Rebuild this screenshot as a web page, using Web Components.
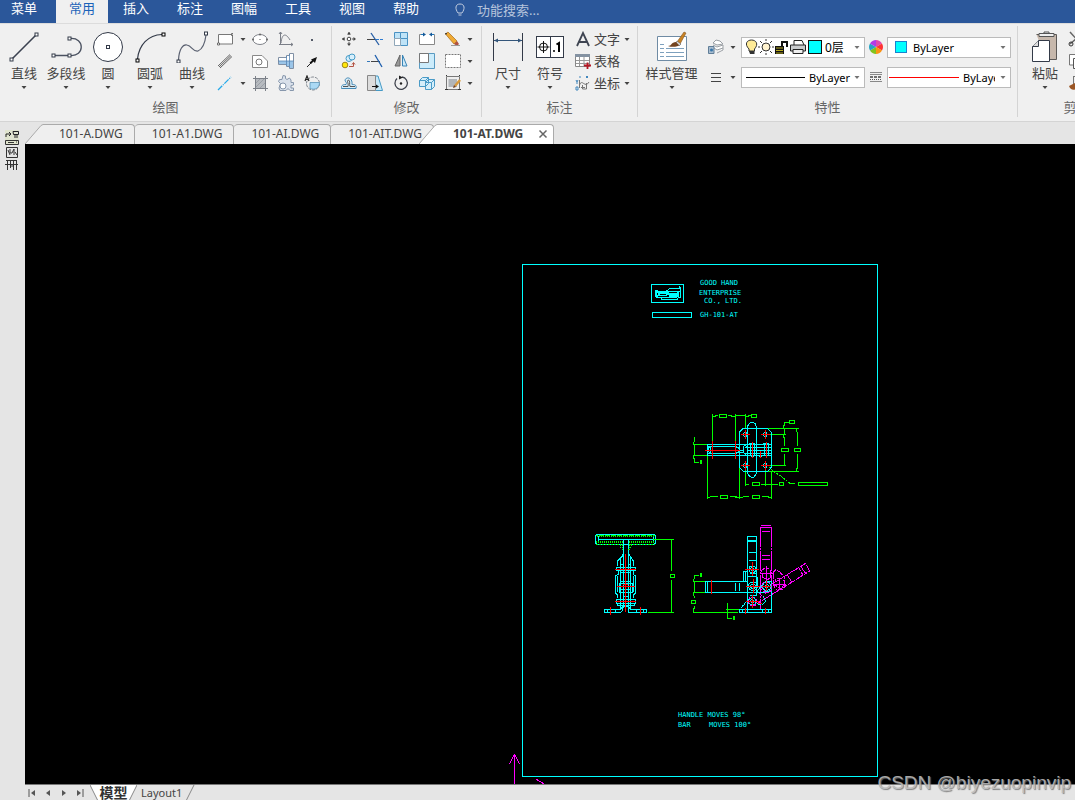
<!DOCTYPE html>
<html lang="zh-CN">
<head>
<meta charset="utf-8">
<title>101-AT.DWG</title>
<style>
html,body{height:100%;margin:0}
body{font:13px/20px "Noto Sans","Noto Sans CJK SC",sans-serif;color:#444;background:#e5e5e5;overflow:hidden}
</style>
</head>
<body>
<cad-app></cad-app>
<script>
const node = (x, y, c = '#333a48') => `<rect x="${x - 1.5}" y="${y - 1.5}" width="3" height="3" fill="#fff" stroke="${c}"/>`;
const ICONS = {
  line: ['32 32', `<path d="M4 28L28 4" stroke="#3b4250" stroke-width="1.6"/>${node(3.5,28.5)}${node(28.5,3.5)}`],
  pline: ['32 32', `<path d="M4 24.5H19M20 7.500C35 6 35 26 20 24.500" fill="none" stroke="#4a5160" stroke-width="1.300"/>${node(3.5,24.5)}${node(19.5,24.5)}${node(19.5,7.5)}`],
  circle: ['32 32', `<circle cx="16" cy="16" r="14.500" fill="#fff" stroke="#333a48"/>${node(16,16)}`],
  arc: ['32 32', `<path d="M3.500 28C5 14 14 4 28 3.500" fill="none" stroke="#333a48" stroke-width="1.200"/>${node(3.5,29.5,'#000')}${node(29.5,3.5,'#000')}`],
  curve: ['32 32', `<path d="M2.500 29C3 18 7 13 11 14C16 15 17 21 22 20C27 18 29 12 30 4" fill="none" stroke="#5a6070" stroke-width="1.200"/>${node(2.5,30.5)}${node(30,2.5)}`],
  dim: ['32 32', `<path d="M1.500 2V30M30.500 2V30" stroke="#333a48"/><path d="M2 9.500H30" stroke="#33557a"/><path d="M2 9.500l4-2v4zM30 9.500l-4-2v4z" fill="#33557a"/>`],
  symbol: ['32 32', `<rect x="2.500" y="5.500" width="27" height="21" fill="#fff" stroke="#333a48"/><path d="M16.500 5V27" stroke="#333a48"/><circle cx="9.500" cy="16" r="4" fill="none" stroke="#111"/><path d="M3.500 16H15.500M9.500 10V22" stroke="#111"/><circle cx="20" cy="20" r="1" fill="#000"/><path d="M22.500 13.500L25 12V21" fill="none" stroke="#000" stroke-width="2"/>`],
  style: ['32 32', `<path d="M1.500 5.500H30.500V29.500H1.500Z" fill="#fff" stroke="#6f8ba4"/><path d="M4 13.500H8M4 17.500H8M4 21.500H8M4 25.500H8M10 17.500H28M10 21.500H28M10 25.500H28" stroke="#7da0bd"/><path d="M21 11L28 1L30 2L24 13Z" fill="#c98324" stroke="#85561f" stroke-width=".6"/><path d="M21 10l4 3-2 2-3-3z" fill="#ddd" stroke="#555" stroke-width=".6"/><path d="M20 11C15 11 16 15 12 15C17 17 23 15 23 14Z" fill="#734420"/>`],
  paste: ['32 32', `<path d="M7.500 3.500H27.500V28.500H17" fill="#c7b8ac" stroke="#5d5a58"/><path d="M10 2.500H25V5.500H10ZM15 3V1H20V3" fill="#eee" stroke="#555"/><path d="M9.500 9.500H20.500V30.500H3.500V15.500Z" fill="#fff" stroke="#333a48"/><path d="M3.500 15.500H9.500V9.500" fill="#ddd" stroke="#333a48"/>`],
  rect: ['16 16', `<path d="M1.500 3.500H15.500V13H1.500Z" fill="#fdfdfd" stroke="#777"/><path d="M.5 12h2v2h-2zM14.500 2.500h1.500v2h-1.500z" fill="#fff" stroke="#555" stroke-width=".8"/>`],
  ellipse: ['16 16', `<ellipse cx="8" cy="8.500" rx="7" ry="5" fill="#fff" stroke="#80838a"/><circle cx="1" cy="8.500" r="1" fill="#666"/><circle cx="15" cy="8.500" r="1" fill="#666"/><circle cx="8" cy="3.500" r="1" fill="#666"/><circle cx="8" cy="8.500" r=".6" fill="#444"/>`],
  graph: ['16 16', `<path d="M2.500 1V13.500H15M1 3l1.500-2L4 3M1 13.500H3M13 12l2 1.500-2 1.500" fill="none" stroke="#7a7e87"/><path d="M3 12C4 2 8 2 12 9" fill="none" stroke="#7a7e87"/>`],
  point: ['16 16', `<path d="M7 8h2v2h-2z" fill="#555b68"/>`],
  parallel: ['16 16', `<path d="M1 13L13 1.500M3 15L15 3.500M2 14L14 2.500" stroke="#555" stroke-width=".9"/>`],
  plate: ['16 16', `<path d="M.5 2.500H10L15.500 8V14.500H.5Z" fill="#fff" stroke="#888"/><circle cx="7" cy="9" r="3" fill="none" stroke="#777"/>`],
  shaft: ['16 16', `<path d="M.5 4.500H8.500V2.500H11.500V.5H15.500V15.500H11.500V13.500H8.500V11.500H.5Z" fill="#fff" stroke="#8090a5"/><path d="M1 8H15V15H11.500V13H8.500V11H1Z" fill="#9bc5e8"/><path d="M8.500 3V13M11.500 1V15M0 8H16" stroke="#5685b5" stroke-width=".8"/>`],
  arrow: ['16 16', `<path d="M3 14L9 8" stroke="#222"/><path d="M13 4L11 10 9.500 8.500 7 11 5.500 9.500 8 7.500 7 6.500Z" fill="#111"/>`],
  center: ['16 16', `<path d="M1 15L14 2" stroke="#23a9ea" stroke-width="1.300" stroke-dasharray="6 1 1 1"/>`],
  hatch: ['16 16', `<path d="M3.500 3.500H13.500V12L12 13.500H3.500Z" fill="#b6babf"/><path d="M4 8L8 4M4 12L12 4M8 13L13 8" stroke="#9a9fa6"/><path d="M3.500 1V16M13.500 1V16M1 3.500H16M1 13.500H16" stroke="#7b8088"/>`],
  gear: ['16 16', `<path d="M5 .5L7.500 1V3.500L9 4.500L11.500 3L13 5V7.500H15.500V10L13 10.500V13H15.500V15.500H12L10 13.500L8 15.500H2L1 13L2.500 8.500L.5 6.500L1.500 4.500L4 4.500Z" fill="#d9e0ea" stroke="#8797ac"/><circle cx="5" cy="11" r="3" fill="#fff" stroke="#8797ac"/>`],
  region: ['16 16', `<circle cx="9" cy="8.500" r="6.500" fill="none" stroke="#80868e" stroke-dasharray="3 1"/><path d="M6 7.500H15.500C15.500 13 11 15.500 6 13.500Z" fill="#abd9f4" stroke="#5d96b8" stroke-width=".8"/><path d="M1 6L3 1L5 6M2 4.500H4" fill="none" stroke="#222" stroke-width="1.200"/>`],
  move: ['16 16', `<circle cx="8" cy="8" r="1.800" fill="#fff" stroke="#444"/><path d="M8 1V5M8 11V15M1 8H5M11 8H15" stroke="#555" stroke-dasharray="3 1"/><path d="M8 1l2 2.500H6zM8 15l2-2.500H6zM1 8l2.500-2v4zM15 8l-2.500-2v4z" fill="#444"/>`],
  trim: ['16 16', `<path d="M0 8.500H8" stroke="#444"/><path d="M9 8.500H16" stroke="#2e7bd0" stroke-dasharray="3 1"/><path d="M4 2L12 14" stroke="#245ca5" stroke-width="1.300"/>`],
  extend: ['16 16', `<path d="M0 8.500H10" stroke="#3378bb" stroke-dasharray="3 1"/><path d="M4 8.500H13" stroke="#444"/><path d="M8 2L15 14" stroke="#1e5fae" stroke-width="1.300"/>`],
  array: ['16 16', `<path d="M1.500 1.500H7.500V7.500H1.500ZM7.500 1.500H14.500V7.500H7.500ZM7.500 7.500H14.500V14.500H7.500Z" fill="#bfe3f7" stroke="#4a92c3"/><path d="M1.500 7.500H7.500V14.500H1.500Z" fill="#fff" stroke="#8fa6b8"/>`],
  brk: ['16 16', `<path d="M5 3.500H.5V13.500H15.500V3.500H12" fill="#fff" stroke="#888"/><path d="M2 3.500H6M15 3.500H11" stroke="#1b76bd" stroke-width="1.200"/><path d="M4 1.500l3 2-3 2zM13 1.500l-3 2 3 2z" fill="#155998"/>`],
  erase: ['16 16', `<path d="M.5 3L3 1L12 10L9 13Z" fill="#f0aa34" stroke="#a56c1b" stroke-width=".7"/><path d="M9 13l3-3 2 3-2 2z" fill="#b05240"/><path d="M0 2l2 0-1 2z" fill="#222"/><path d="M6 14.500H15" stroke="#999"/>`],
  copy: ['16 16', `<circle cx="4" cy="12" r="2.800" fill="#ffe60a" stroke="#9c861c"/><circle cx="8" cy="5.500" r="3" fill="#d8effb" stroke="#459bc7"/><circle cx="11" cy="4" r="3" fill="#d8effb" stroke="#459bc7"/><path d="M8 13.500H12.500V10M11 11.500l1.500-2 1.500 2" fill="none" stroke="#b45445"/>`],
  mirror: ['16 16', `<path d="M7 2V13H2Z" fill="#999" stroke="#666"/><path d="M9.500 2V13H14Z" fill="#cfe9f8" stroke="#3884b6"/>`],
  scale: ['16 16', `<path d="M.5 .5H15.500V15.500H.5Z" fill="#ccecfb" stroke="#599ac1"/><path d="M.5 .5H9.500V9.500H.5Z" fill="#fff" stroke="#777"/>`],
  dash: ['16 16', `<rect x=".5" y="1.500" width="15" height="13" fill="#fff" stroke="#777" stroke-dasharray="2 1"/>`],
  offset: ['16 16', `<path d="M.5 13.500H15C16 9.500 13 9.500 11 9.500C12 2 4 1 4 6C5 7 6 8 5 9.500C1 9.500 0 11 .5 13.500" fill="#d8edf8" stroke="#468ab6"/><path d="M2 11.500H7C8 8 5 6 7.500 5C9.500 6 8 9 9 11.500H14" fill="none" stroke="#555"/>`],
  stretch: ['16 16', `<path d="M8 1H11L15.500 15.500H8Z" fill="#c6e9f9" stroke="#4599c5"/><path d="M.5 .5H8.500V15.500H.5Z" fill="#ddd" stroke="#888"/><path d="M5 11.500H10" stroke="#111"/><path d="M12 11.500l-3-2v4z" fill="#111"/>`],
  rotate: ['16 16', `<path d="M4 3.500A6.200 6.200 0 1 0 9 2" fill="none" stroke="#3e424c" stroke-width="1.300"/><path d="M6 .5l4 2-4 2z" fill="#222"/><circle cx="8" cy="8.500" r="1.200" fill="#222"/>`],
  explode: ['16 16', `<path d="M.5 5.500L3.500 2.500H9.500V8.500L6.500 11.500H.5ZM6.500 7.500L9.500 4.500H15.500V11.500L12.500 14.500H6.500ZM6.500 7.500H12.500V14.500M12.500 7.500L15.500 4.500M.5 5.500H6.500V11.500M6.500 5.500L9.500 2.500" fill="#d5eefa" stroke="#4a9bc7"/>`],
  hatchedit: ['16 16', `<path d="M1.500 1.500H14.500V14.500H1.500Z" fill="#eee" stroke="#777"/><path d="M3.500 4H12V12H3.500Z" fill="#b1b5b9"/><path d="M10 11L15 5" stroke="#d89a3c" stroke-width="2.500"/><path d="M8 13l1-3 2 2z" fill="#723e21"/><path d="M1 .5h1M14 .5h1M0 14.500h3M13 14.500h3" stroke="#333"/>`],
  text: ['16 16', `<path d="M2 15L8 2L14 15M4 11H12" fill="none" stroke="#3f4552" stroke-width="1.800"/>`],
  table: ['16 16', `<path d="M.5 1.500H14.500V13.500H.5Z" fill="#fff" stroke="#888"/><path d="M0 1H15V4H0Z" fill="#8492a2"/><path d="M1 7.500H14M1 10.500H14M4.500 4V13M9 4V13" stroke="#999"/><path d="M12.500 9.500V16M9 12.500H16" stroke="#b51724" stroke-width="1.800"/>`],
  coord: ['16 16', `<path d="M4.500 5V13M4.500 10C7 3 10 14 14 7M6 12.500H10M11.500 8V14H7.500V10" fill="none" stroke="#777"/><path d="M1 5l1 2 1-2M2 7v2M5 1v2M11 1l2 2M13 1l-2 2M1 12h2v3H1z" fill="none" stroke="#4187bd"/>`],
  layers: ['16 16', `<path d="M5 4L8 1L12 2L15 5L9 6ZM5 6L9 8L15 6V9L9 11L6 9M15 9V11L9 14" fill="#fff" stroke="#9a9fa4"/><path d="M.5 7.500H6V14.500H.5Z" fill="#a8bccf" stroke="#607e98"/><circle cx="3.500" cy="11" r="1.500" fill="#3474a9"/>`],
  lines: ['16 16', `<path d="M3 4.500H13M3 8.500H13M3 12.500H13" stroke="#444" stroke-width="1.200"/>`],
  linetype: ['16 16', `<path d="M2 3.500H14M2 5.500H14M2 12.500H14" stroke="#888"/><path d="M2 8H14" stroke="#444" stroke-width="1.500" stroke-dasharray="3 1"/><path d="M2 10.500H14" stroke="#555" stroke-dasharray="1 1"/>`],
  wheel: ['16 16', `<path d="M8 8L8 1A7 7 0 0 1 14 4.500Z" fill="#e04bb0"/><path d="M8 8L14 4.500A7 7 0 0 1 14 11.500Z" fill="#f33"/><path d="M8 8L14 11.500A7 7 0 0 1 8 15Z" fill="#fb9412"/><path d="M8 8V15A7 7 0 0 1 2 11.500Z" fill="#83c31c"/><path d="M8 8L2 11.500A7 7 0 0 1 2 4.500Z" fill="#25a4c4"/><path d="M8 8L2 4.500A7 7 0 0 1 8 1Z" fill="#b23be8"/>`],
  bulb: ['12 16', `<path d="M3 10C-2 5 1 1 5.500 1C10 1 13 5 8.500 10V12H3Z" fill="#ffeb97" stroke="#333"/><path d="M3 12h5.500v3H4z" fill="#333"/>`],
  sun: ['16 16', `<circle cx="8" cy="8" r="4" fill="#fff3cf" stroke="#333"/><path d="M8 0V2M8 14V16M0 8H2M14 8H16M2 2l2 2M12 12l2 2M2 14l2-2M12 4l2-2" stroke="#333"/>`],
  lock: ['16 16', `<path d="M8 8V3H13V8" fill="none" stroke="#111" stroke-width="2"/><path d="M1 7H10V15H1Z" fill="#111"/><path d="M2 9H9M2 11.500H9M2 14H9" stroke="#b8aa20"/>`],
  printer: ['16 16', `<path d="M4 6V1.500H12L14 6" fill="#fff" stroke="#222"/><path d="M.5 6H15.500V12H.5Z" fill="#c9cbcd" stroke="#222"/><path d="M3 10.500H13V14.500H3Z" fill="#eee" stroke="#222"/>`],
  cut: ['16 16', `<path d="M2 1L12 12M8 8L2 13" stroke="#666" stroke-width="1.500"/><circle cx="3" cy="13" r="2" fill="none" stroke="#333"/>`],
  pages: ['16 16', `<path d="M1.500 1.500H9V12H1.500Z" fill="#fff" stroke="#777"/><path d="M5.500 5.500H14V15.500H5.500Z" fill="#fff" stroke="#555"/>`],
  brush: ['16 16', `<path d="M5.500 1V10M5 1.500H15" stroke="#777"/><path d="M1 11L7 8L8 14C5 16 2 14 1 11Z" fill="#9b5625"/>`],
  tip: ['12 16', `<path d="M4 11C1 7 1 2 6 2C11 2 11 7 8 11ZM4.500 13H7.500" fill="none" stroke="#c2cde0"/>`],
  first: ['8 8', `<path d="M1 0V8" stroke="#555"/><path d="M7 1V7L3 4Z" fill="#555"/>`],
  prev: ['8 8', `<path d="M6 1V7L2 4Z" fill="#555"/>`],
  next: ['8 8', `<path d="M2 1V7L6 4Z" fill="#555"/>`],
  last: ['8 8', `<path d="M7 0V8" stroke="#555"/><path d="M1 1V7L5 4Z" fill="#555"/>`],
  drop: ['8 8', `<path d="M1.500 3H6.500L4 6Z" fill="#444"/>`],
  close: ['10 10', `<path d="M1.500 1.500L8.500 8.500M8.500 1.500L1.500 8.500" stroke="#666" stroke-width="1.500"/>`],
  dock: ['14 42', `<path d="M0 0H14V14H0Z" fill="#e0e4ce"/><path d="M1 7V4H6M4 2l2 2-2 2M8 1.500H13.500V4.500H8.500ZM10 5V8M12 5V8" fill="none" stroke="#222"/><path d="M.5 10.500H13.500V14.500H.5ZM3 12.500H9M11 12H12" fill="none" stroke="#333"/><path d="M1.500 17.500H12.500V27.500H1.500ZM3 20L5 25M5 19V23H7L9 19V25M10 22l2 3" fill="none" stroke="#333"/><path d="M1 30.500H12M0 34.500H13M2.500 31V40M5.500 31V38M8.500 30V40M11.500 31V40M5 36H9" fill="none" stroke="#333"/>`]
};

function define(name, css, html) {
  const make = typeof html === 'function' ? html : () => html;
  customElements.define(name, class extends HTMLElement {
    connectedCallback() {
      if (this.shadowRoot) return;
      this.attachShadow({ mode: 'open' }).innerHTML =
        `<style>*{box-sizing:border-box}button,input,select{font:inherit;color:inherit;margin:0;border:0;padding:0;background:none}${css}</style>${make(this)}`;
    }
  });
}

define('cad-icon', `:host{display:block;flex:none}svg{display:block}`, el => {
  const [size, body] = ICONS[el.getAttribute('name')];
  const [w, h] = size.split(' ');
  return `<svg width="${w}" height="${h}" viewBox="0 0 ${size}" aria-hidden="true">${body}</svg>`;
});

define('menu-item', `
:host{display:block;width:52px}
button{display:block;width:100%;height:23px;padding-bottom:7px;color:#fff;line-height:16px;text-align:center}
:host([first]){width:48px;margin-right:6px}
:host([active]) button{background:#f0f0f0;color:#1b63b9}`, `<button type="button"><slot></slot></button>`);

define('cad-menubar', `
:host{display:flex;gap:2px;height:23px;background:#2b579a}
.find{display:flex;align-items:flex-start;gap:11px;height:19px;margin-left:20px;padding-top:2px;color:#b6c4dc}
input{width:120px;height:16px;line-height:16px;outline:0}
input::placeholder{color:#b6c4dc;opacity:1}`, `
<menu-item first>菜单</menu-item><menu-item active>常用</menu-item><menu-item>插入</menu-item><menu-item>标注</menu-item><menu-item>图幅</menu-item><menu-item>工具</menu-item><menu-item>视图</menu-item><menu-item>帮助</menu-item>
<label class="find"><cad-icon name="tip"></cad-icon><input type="text" placeholder="功能搜索..." aria-label="功能搜索"></label>`);

define('ribbon-group', `
:host{display:flex;flex:none;flex-direction:column;width:var(--w);border-right:1px solid #d4d4d4;padding-top:2px}
.body{display:flex;height:66px;flex:none;padding-left:var(--start,0)}
.title{margin-top:3px;height:20px;flex:none;text-align:center;color:#666}`, el => `
<div class="body"><slot></slot></div><div class="title">${el.getAttribute('label')}</div>`);

define('big-tool', `
:host{display:block;width:42px;flex:none}
button{display:flex;flex-direction:column;align-items:center;width:100%;padding-top:3px;white-space:nowrap}`, el => `
<button type="button"><cad-icon name="${el.getAttribute('icon')}"></cad-icon><span><slot></slot></span><cad-icon name="drop"></cad-icon></button>`);

define('small-tool', `
:host{display:block}
button{display:flex;align-items:center;justify-content:center;min-width:16px;height:22px}`, el => `
<button type="button" aria-label="${el.getAttribute('icon')}"><cad-icon name="${el.getAttribute('icon')}"></cad-icon></button>`);

define('row-tool', `
:host{display:block}
button{display:flex;align-items:center;height:22px}
span{margin:0 3px}`, el => `
<button type="button"><cad-icon name="${el.getAttribute('icon')}"></cad-icon><span><slot></slot></span>${el.hasAttribute('drop') ? '<cad-icon name="drop"></cad-icon>' : ''}</button>`);

define('tool-grid', `:host{display:grid;grid-template-columns:var(--cols);grid-auto-rows:22px;justify-items:start;flex:none}`, `<slot></slot>`);

define('prop-combo', `
:host{display:flex;align-items:center;position:relative;width:124px;height:21px;border:1px solid #bbb;background:#fff;color:#000;overflow:hidden}
select{flex:1;min-width:0;height:19px;appearance:none;outline:0;font-size:11px;line-height:19px;text-overflow:clip}
select.narrow{margin-right:4px}
:host([layer]) select{font-size:12px}
.drop{margin-right:3px;opacity:.75}`, el => `
<slot></slot><select aria-label="${el.getAttribute('label')}"${el.hasAttribute('narrow') ? ' class="narrow"' : ''}><option>${el.getAttribute('value')}</option></select><cad-icon class="drop" name="drop"></cad-icon>`);

define('cad-ribbon', `
:host{display:flex;height:99px;padding:2px 0 4px;background:#f0f0f0;border-bottom:1px solid #d4d4d4;border-top:1px solid #dcdcdc;overflow:hidden}
ribbon-group:last-child{border:0}
.wide{width:67px}
.props{display:grid;grid-template-columns:16px 17px 124px 22px 124px;grid-auto-rows:30px;align-items:center;justify-items:center;padding:4px 0 0 3px}
.icons{display:flex;align-items:center;margin:0 3px 0 4px}
.sw{width:14px;height:14px;background:#0ff;border:1px solid #111;margin-left:2px}
.sw.b{width:12px;height:12px;border-color:#1a83cf;margin:0 6px 0 7px}
.ln{flex:none;width:59px;height:1px;background:#000;margin:0 4px}
.ln.r{width:70px;background:#f00;margin:0 4px 0 1px}
tool-grid.c{margin-left:2px}
tool-grid.t{margin-left:4px}
small-tool[icon=drop]{justify-self:center}`, `
<ribbon-group label="绘图" style="--w:332px;--start:3px">
<big-tool icon="line">直线</big-tool><big-tool icon="pline">多段线</big-tool><big-tool icon="circle">圆</big-tool><big-tool icon="arc">圆弧</big-tool><big-tool icon="curve">曲线</big-tool>
<tool-grid style="--cols:16px 19px 26px 26px 16px;margin-left:4px">
<small-tool icon="rect"></small-tool><small-tool icon="drop"></small-tool><small-tool icon="ellipse"></small-tool><small-tool icon="graph"></small-tool><small-tool icon="point"></small-tool>
<small-tool icon="parallel"></small-tool><span></span><small-tool icon="plate"></small-tool><small-tool icon="shaft"></small-tool><small-tool icon="arrow"></small-tool>
<small-tool icon="center"></small-tool><small-tool icon="drop"></small-tool><small-tool icon="hatch"></small-tool><small-tool icon="gear"></small-tool><small-tool icon="region"></small-tool>
</tool-grid></ribbon-group>
<ribbon-group label="修改" style="--w:150px;--start:9px">
<tool-grid style="--cols:26px 26px 26px 26px 16px 18px">
<small-tool icon="move"></small-tool><small-tool icon="trim"></small-tool><small-tool icon="array"></small-tool><small-tool icon="brk"></small-tool><small-tool icon="erase"></small-tool><small-tool icon="drop"></small-tool>
<small-tool icon="copy"></small-tool><small-tool icon="extend"></small-tool><small-tool icon="mirror"></small-tool><small-tool icon="scale"></small-tool><small-tool icon="dash"></small-tool><small-tool icon="drop"></small-tool>
<small-tool icon="offset"></small-tool><small-tool icon="stretch"></small-tool><small-tool icon="rotate"></small-tool><small-tool icon="explode"></small-tool><small-tool icon="hatchedit"></small-tool><small-tool icon="drop"></small-tool>
</tool-grid></ribbon-group>
<ribbon-group label="标注" style="--w:156px;--start:5px">
<big-tool icon="dim">尺寸</big-tool><big-tool icon="symbol">符号</big-tool>
<tool-grid class="t" style="--cols:auto"><row-tool icon="text" drop>文字</row-tool><row-tool icon="table">表格</row-tool><row-tool icon="coord" drop>坐标</row-tool></tool-grid>
</ribbon-group>
<ribbon-group label="特性" style="--w:380px">
<big-tool class="wide" icon="style">样式管理</big-tool>
<div class="props">
<small-tool icon="layers"></small-tool><small-tool icon="drop"></small-tool>
<prop-combo layer label="图层" value="0层"><div class="icons"><cad-icon name="bulb"></cad-icon><cad-icon name="sun"></cad-icon><cad-icon name="lock"></cad-icon><cad-icon name="printer"></cad-icon><div class="sw"></div></div></prop-combo>
<small-tool icon="wheel"></small-tool>
<prop-combo label="颜色" value="ByLayer"><div class="sw b"></div></prop-combo>
<small-tool icon="lines"></small-tool><small-tool icon="drop"></small-tool>
<prop-combo label="线型" value="ByLayer"><div class="ln"></div></prop-combo>
<small-tool icon="linetype"></small-tool>
<prop-combo narrow label="线宽" value="ByLayer"><div class="ln r"></div></prop-combo>
</div></ribbon-group>
<ribbon-group label="剪贴板" style="--w:130px;--start:6px">
<big-tool icon="paste">粘贴</big-tool>
<tool-grid class="c" style="--cols:16px"><small-tool icon="cut"></small-tool><small-tool icon="pages"></small-tool><small-tool icon="brush"></small-tool></tool-grid>
</ribbon-group>`);

define('dwg-tab', `
:host{display:flex;height:20px;flex:none;--fill:#efefef}
:host([active]){--fill:#fff;margin-left:-15px;position:relative;font-weight:700}
svg{display:block}
button{height:20px;padding:0 11px 2px 17px;border:1px solid #aaa;border-width:1px 1px 0 0;border-radius:4px 4px 0 0;background:var(--fill);font-size:12px;line-height:16px;display:flex;align-items:center;gap:15px;white-space:nowrap}
:host([slant]) button{border-radius:0 4px 0 0;padding-left:16px}
:host([active]) button{padding:0 5px 2px 16px}`, el => `
${el.hasAttribute('slant') ? '<svg width="18" height="20" viewBox="0 0 18 20"><path d="M0 20L16 1.500L18 .5V20Z" fill="var(--fill)"/><path d="M0 20L16 1.500L18 .5" fill="none" stroke="#aaa"/></svg>' : ''}<button type="button" role="tab"><slot></slot>${el.hasAttribute('active') ? '<cad-icon name="close"></cad-icon>' : ''}</button>`);

define('dwg-tabs', `:host{display:flex;align-items:flex-end;height:22px;background:#e5e5e5;overflow:hidden}`, `
<dwg-tab slant>101-A.DWG</dwg-tab><dwg-tab>101-A1.DWG</dwg-tab><dwg-tab>101-AI.DWG</dwg-tab><dwg-tab>101-AIT.DWG</dwg-tab><dwg-tab slant active>101-AT.DWG</dwg-tab>`);

define('sheet-strip', `
:host{display:flex;height:16px;flex:none;box-sizing:border-box;background:#e5e5e5;border-top:1px solid #777;overflow:hidden}
nav{display:flex;gap:8px;padding:4px 0 0 3px;height:15px}
nav button{width:8px;height:8px}
.tab{position:relative;height:15px;display:block}
.tab svg{display:block;position:absolute;left:0;top:0}
.tab span{position:relative}
.m{width:47px;margin-left:6px;font:700 14px/14px "Noto Sans","Noto Sans CJK SC",sans-serif;color:#333}
.l{width:58px;font-size:11px;line-height:14px;text-align:left;padding-left:4px}`, `
<nav><button type="button" aria-label="first"><cad-icon name="first"></cad-icon></button><button type="button" aria-label="previous"><cad-icon name="prev"></cad-icon></button><button type="button" aria-label="next"><cad-icon name="next"></cad-icon></button><button type="button" aria-label="last"><cad-icon name="last"></cad-icon></button></nav>
<button type="button" class="tab m"><svg width="47" height="16"><path d="M0 0H47L39 16H8Z" fill="#fff"/><path d="M0 0L8 16M47 0L39 16" stroke="#888"/></svg><span>模型</span></button>
<button type="button" class="tab l"><svg width="58" height="16"><path d="M57 0L49 16" stroke="#888"/></svg><span>Layout1</span></button>`);

define('cad-drawing', `
:host{display:block;flex:1;min-height:0;background:#000;overflow:hidden}
svg{display:block;shape-rendering:crispEdges;fill:none;stroke-width:1}
svg svg{stroke-width:3;overflow:visible}
.c{stroke:#0ff}.g{stroke:#0f0}.r{stroke:#f00}.m{stroke:#f0f}
.f{fill:#0ff}.gf{fill:#0f0}
text{fill:#0ff;stroke:none;font:7px "DejaVu Sans Mono",monospace;white-space:pre}`, `
<svg width="100%" height="100%" role="img" aria-label="101-AT"><g transform="translate(-25 -144)">
<path class="c" d="M522.500 264.500H877.500V776.500H522.500Z"/>
<path class="m" d="M514.500 754V784M514.500 754.500L509.500 764M514.500 754.500L519.500 764M536 779L544 784"/>
<text x="700" y="285">GOOD HAND</text><text x="699" y="295">ENTERPRISE</text><text x="704" y="303">CO., LTD.</text><text x="700" y="317">GH-101-AT</text>
<text x="678" y="717">HANDLE MOVES 98°</text><text x="678" y="727">BAR</text><text x="709" y="727">MOVES 100°</text>

<svg x="640" y="260" width="250" height="65" viewBox="0 0 750 195">
<path class="c" d="M34 73H131V128H34ZM37 157H155V173H37ZM48 93H80L90 85H118V79M48 112H62L64 118H112L115 112H122V82M82 94H118M82 99H112L122 94M52 106H82M64 112H110"/>
<path class="f" d="M46 90H54V96H88V100H112V94H118V110H86V106H54V112H46Z"/>
<path d="M53 98V104M60 103H78" stroke="#000"/>
</svg>

<svg x="680" y="405" width="160" height="100" viewBox="0 0 480 300">
<path class="g" d="M97 28V110M166 28V110M196 28V70M97 34H106L108 31H114M118 28H140V38H118ZM144 31H153L156 34H166M166 31H196M196 34H204L207 31H214M214 28H230V38H214ZM43 96V110L40 112V118H97M43 118V151M40 151H90M40 151V160L43 162V172H57"/>
<path class="g" d="M262 70H357M270 88H318M328 46H344V56H328ZM328 52H313V60L310 64V70M313 70V88L310 90V95L313 98V123M304 130H326V140H304ZM313 147V181M262 181H318M349 70V80L352 82V123M343 130H362V140H343ZM352 147V190L349 192V199M265 199H357"/>
<path class="g" d="M196 190V243M256 190V243M82 151V282M178 185V282M274 199V282M217 232H239V242H217ZM196 238H207M242 238H294M298 232H311V242H298ZM355 232H443V242H355ZM330 235H345M82 277H90L92 274H114M121 271H143V281H121ZM150 274H170M165 277H188L190 274H207M217 271H239V281H217ZM246 274H265L267 277H275"/>
<path class="g" d="M268 187L284 202L298 210L330 235" stroke-dasharray="6 3"/>
<path class="gf" d="M60 165H66V177H60Z"/>
<path class="c" d="M190 70H262L274 82V187L263 199H190L178 187V82ZM202 199V65L208 55L214 52H220L226 57L229 65V205L222 216H213L205 210L202 199M82 118H274M82 151H274M85 124H169L179 133M85 145H169L179 139M91 124V145L85 139V130L91 124M82 118V151M166 127H178M166 142H190M196 127H274M205 136H274M196 145H274M190 124L196 121L202 127V145L196 148L190 142ZM178 136H190M211 115V154M223 115V154M208 115H226M214 154H223M253 115V154M265 115V151M250 115H268M237 151L241 157L249 151"/>
<path class="c" d="M193 82H199L202 88L199 94H193L190 88ZM253 82H259L262 88L259 94H253L250 88ZM193 175H199L202 181L199 187H193L190 181ZM253 175H259L262 181L259 187H253L250 181Z"/>
<path class="r" d="M76 136H181M97 108V162M166 108V162M217 112V158M259 112V158M241 138V158M183 88H210M196 75V102M243 88H270M256 75V102M183 181H210M196 168V195M243 181H270M256 168V195"/>
</svg>

<svg x="585" y="515" width="120" height="110" viewBox="0 0 360 330">
<path class="c" d="M37 58H206L212 64V84L206 89H37L31 84V64ZM40 73H205M115 76V112M130 76V112M40 64V84M205 64V84"/>
<path class="g" d="M34 61H210M34 87H104M136 87H210" stroke-dasharray="6 3"/>
<path class="g" d="M37 64H208M34 82H114M133 82H208" stroke-width="6" stroke-dasharray="3 3"/>
<path class="g" d="M105 88L109 101L115 104M140 88L136 101L130 104M111 88V100M134 88V100" stroke-dasharray="5 3"/>
<path class="c" d="M115 112L112 124L98 138V154M130 112L136 124L145 138V154M94 157H151V166H94ZM106 148H115V172M139 148H130V172M100 169V178L91 183V233L98 241V250M145 169V178L152 183V233L145 241V250M106 130V283M136 130V283M97 184V232M145 184V232M115 118V148M130 118V148M115 172V280M130 172V280M106 172H139M106 199H139M103 205H142V232H103ZM106 214H139M106 223H139M115 244H130M94 253H151V265H94ZM97 265V271H148V265M115 274H130M58 283H106L112 277V286L108 292H58ZM130 274L136 283H185V292H130V280M67 283V292M91 283V292M154 283V292M176 283V292"/>
<path class="r" d="M121 117V292M90 163H154M96 214H149M90 259H154M76 277V300M166 277V300M115 208H130"/>
<path class="g" d="M205 73H267M259 73V167M255 178H267V188H255ZM259 195V292M189 292H267"/>
</svg>

<svg x="685" y="515" width="140" height="110" viewBox="0 0 420 330">
<path class="g" d="M42 181H28V190L25 195V199H61M28 199V232M25 232H61M25 232V241L28 244V249M19 256H32V265H19ZM28 273V280L25 282V292H160M127 264V310H141M123 283H162"/>
<path class="gf" d="M45 174H51V186H45ZM144 303H150V315H144Z"/>
<path class="m" d="M227 35V283M259 35V199" stroke-dasharray="60 3 6 3"/>
<path class="m" d="M227 37H259M227 31H259M230 49H256M231 121H256M231 133H256M226 174H263M244 154V199M265 208H302M283 190V226"/>
<path class="m" d="M260 208L362 145L374 168L310 208L230 257M306 178L320 201M341 158L354 181M348 154L362 176M265 172L274 163L298 184L300 208L287 220L265 208ZM230 166L238 160H250L257 166V186L248 195L232 187ZM223 235L238 250M188 250L196 270L212 271L225 260M230 215L242 235L260 226" stroke-dasharray="12 2"/>
<path class="c" d="M188 64H214V244M188 64V292M188 76H214M188 79H214M191 112H214M191 136H214M194 175H214M188 184H214M188 199H61V232H188M67 199V232M152 205V227M163 205V227M176 199V169H188M182 169V199M217 187V220M194 241H214M164 283H259V292H164ZM173 283V292M188 283V292M232 283V292M250 283V292M188 232H235L259 226V283M245 199H259V232M214 232L235 205L245 199"/>
<path class="c" d="M167 280L190 253M215 266L230 271L242 259L235 244" stroke-dasharray="12 4"/>
<g class="c"><circle cx="202" cy="163" r="10"/><circle cx="202" cy="163" r="5"/><circle cx="204" cy="214" r="13"/><circle cx="204" cy="214" r="7"/><circle cx="202" cy="259" r="11"/><circle cx="202" cy="259" r="5"/><circle cx="245" cy="214" r="12"/><circle cx="245" cy="214" r="5"/></g>
<g class="m" stroke-dasharray="5 3"><circle cx="283" cy="208" r="17"/><circle cx="245" cy="217" r="16"/><circle cx="202" cy="259" r="13"/></g>
<path class="r" d="M79 195V236M180 163H221M202 142V184M184 214H226M204 193V235M182 259H223M202 240V279M232 214H259M245 199V229M181 279V298M241 279V298M220 265H232"/>
</svg>
</g></svg>`);

define('water-mark', `
:host{position:absolute;right:4px;bottom:5px;font:19px/24px "Liberation Sans",sans-serif;color:#b9b9b9;text-shadow:1px 1px 1px #777;opacity:.9;white-space:nowrap;pointer-events:none}`, `<slot></slot>`);

define('cad-app', `
:host{display:flex;flex-direction:column;height:100vh;position:relative;overflow:hidden}
cad-menubar,cad-ribbon{flex:none}
cad-ribbon{box-sizing:border-box}
.work{display:flex;flex:1;min-height:0}
aside{flex:none;width:25px;background:#e5e5e5;padding:8px 0 0 5px}
main{display:flex;flex-direction:column;flex:1;min-width:0}
dwg-tabs{flex:none}`, `
<cad-menubar></cad-menubar><cad-ribbon></cad-ribbon>
<div class="work"><aside><cad-icon name="dock"></cad-icon></aside>
<main><dwg-tabs></dwg-tabs><cad-drawing></cad-drawing><sheet-strip></sheet-strip></main></div>
<water-mark>CSDN @biyezuopinvip</water-mark>`);
</script>
</body>
</html>
